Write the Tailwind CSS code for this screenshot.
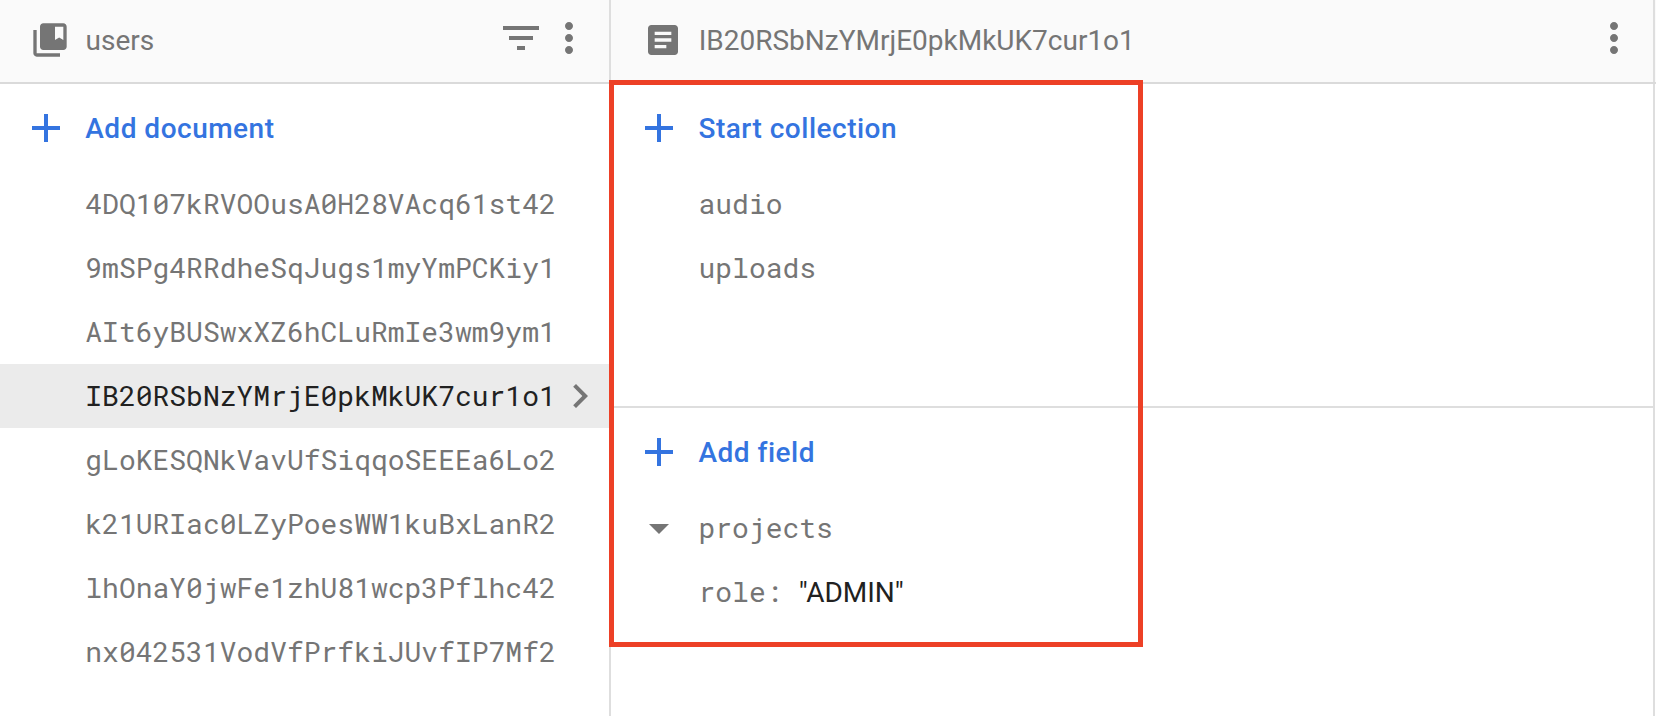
<!DOCTYPE html>
<html lang="en">
<head>
<meta charset="utf-8">
<title>users</title>
<script src="https://cdn.jsdelivr.net/npm/@tailwindcss/browser@4"></script>
</head>
<body class="relative h-[716px] w-[1656px] overflow-hidden bg-white font-[Roboto,sans-serif] text-[28px] leading-8 text-[#757575]">
<svg class="hidden">
  <symbol id="add" viewBox="0 0 24 24"><path d="M19 13h-6v6h-2v-6H5v-2h6V5h2v6h6v2z"/></symbol>
  <symbol id="more" viewBox="0 0 24 24"><path d="M12 8c1.1 0 2-.9 2-2s-.9-2-2-2-2 .9-2 2 .9 2 2 2zm0 2c-1.1 0-2 .9-2 2s.9 2 2 2 2-.9 2-2-.9-2-2-2zm0 6c-1.1 0-2 .9-2 2s.9 2 2 2 2-.9 2-2-.9-2-2-2z"/></symbol>
</svg>
<div class="flex h-full">
  <section class="flex w-[611px] flex-col border-r-2 border-[#dedede]">
    <header class="flex h-[84px] shrink-0 items-center border-b-2 border-[#dadada] bg-[#fafafa] pl-[29.5px] pr-[16.3px] pb-[3px]">
      <svg class="size-10 fill-current" viewBox="0 0 24 24"><path d="M4 6H2v14c0 1.100.9 2 2 2h14v-2H4V6zM20 2H8c-1.100 0-2 .9-2 2v12c0 1.100.9 2 2 2h12c1.100 0 2-.9 2-2V4c0-1.100-.9-2-2-2zm0 10l-2.500-1.500L15 12V4h5v8z"/></svg>
      <h2 class="ml-4 mt-[3px] flex-1">users</h2>
      <svg class="-mt-[3px] size-12 fill-current" viewBox="0 0 24 24"><path d="M10 18h4v-2h-4v2zM3 6v2h18V6H3zm3 7h12v-2H6v2z"/></svg>
      <svg class="-mt-[3px] size-12 fill-current"><use href="#more"/></svg>
    </header>
    <button class="flex h-[88px] items-center pl-[21.7px] font-medium tracking-[0.5px] text-[#3474e0]">
      <svg class="size-12 fill-current"><use href="#add"/></svg><span class="ml-[15.600px] pt-0.5">Add document</span>
    </button>
    <ul class="font-['Roboto_Mono','Liberation_Mono',monospace]">
      <li class="flex h-16 items-center pl-[85.3px]">4DQ107kRVOOusA0H28VAcq61st42</li>
      <li class="flex h-16 items-center pl-[85.3px]">9mSPg4RRdheSqJugs1myYmPCKiy1</li>
      <li class="flex h-16 items-center pl-[85.3px]">AIt6yBUSwxXZ6hCLuRmIe3wm9ym1</li>
      <li class="flex h-16 items-center bg-[#ebebeb] pl-[85.3px] text-[#212121]">IB20RSbNzYMrjE0pkMkUK7cur1o1<svg class="ml-[0.700px] -mr-4 size-12 fill-[#757575]" viewBox="0 0 24 24"><path d="M8.590 16.590L13.170 12 8.590 7.410 10 6l6 6-6 6z"/></svg></li>
      <li class="flex h-16 items-center pl-[85.3px]">gLoKESQNkVavUfSiqqoSEEEa6Lo2</li>
      <li class="flex h-16 items-center pl-[85.3px]">k21URIac0LZyPoesWW1kuBxLanR2</li>
      <li class="flex h-16 items-center pl-[85.3px]">lhOnaY0jwFe1zhU81wcp3Pflhc42</li>
      <li class="flex h-16 items-center pl-[85.3px]">nx042531VodVfPrfkiJUvfIP7Mf2</li>
    </ul>
  </section>
  <section class="flex flex-1 flex-col">
    <header class="flex h-[84px] shrink-0 border-b-2 border-[#dadada] bg-[#fafafa]">
      <div class="mr-px flex flex-1 items-center border-r-2 border-[#dedede] pl-[31.7px] pr-[15px] pb-[2px]">
        <svg class="size-10 fill-current" viewBox="0 0 24 24"><path d="M19 3H5c-1.100 0-2 .9-2 2v14c0 1.100.9 2 2 2h14c1.100 0 2-.9 2-2V5c0-1.100-.9-2-2-2zm-5 14H7v-2h7v2zm3-4H7v-2h10v2zm0-4H7V7h10v2z"/></svg>
        <h2 class="ml-4 mt-[2px] flex-1">IB20RSbNzYMrjE0pkMkUK7cur1o1</h2>
        <svg class="-mt-[4px] size-12 fill-current"><use href="#more"/></svg>
      </div>
    </header>
    <div class="mr-px flex flex-1 flex-col border-r-2 border-[#dedede]">
      <div class="h-[324px] border-b-2 border-[#dedede]">
        <button class="flex h-[88px] items-center pl-[23.5px] font-medium tracking-[0.5px] text-[#3474e0]">
          <svg class="size-12 fill-current"><use href="#add"/></svg><span class="ml-4 pt-0.5">Start collection</span>
        </button>
        <ul class="font-['Roboto_Mono','Liberation_Mono',monospace]">
          <li class="flex h-16 items-center pl-[87.5px]">audio</li>
          <li class="flex h-16 items-center pl-[87.5px]">uploads</li>
        </ul>
      </div>
      <button class="flex h-[88px] items-center pl-[23.5px] font-medium tracking-[0.5px] text-[#3474e0]">
        <svg class="size-12 fill-current"><use href="#add"/></svg><span class="ml-4 pt-0.5">Add field</span>
      </button>
      <ul class="font-['Roboto_Mono','Liberation_Mono',monospace]">
        <li class="flex h-16 items-center pl-[23.5px]"><svg class="mr-4 size-12 fill-current" viewBox="0 0 24 24"><path d="M7 10l5 5 5-5z"/></svg>projects</li>
        <li class="flex h-16 items-center whitespace-pre pl-[87.5px]">role: <span class="-ml-[0.500px] pt-0.5 font-[Roboto,sans-serif] text-[#212121]">"ADMIN"</span></li>
      </ul>
    </div>
  </section>
</div>
<div class="absolute left-[609px] top-20 h-[567px] w-[534px] border-[5px] border-[#ed4026]"></div>
</body>
</html>
